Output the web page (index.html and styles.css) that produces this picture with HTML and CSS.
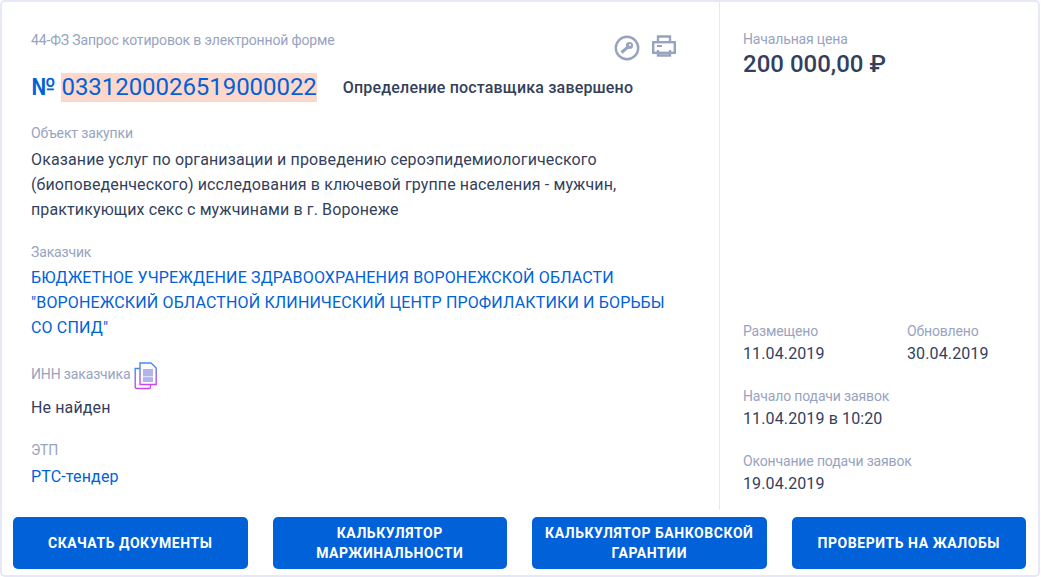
FILE: index.html
```html
<!DOCTYPE html>
<html lang="ru">
<head>
    <meta charset="UTF-8">
    <title>Закупка 0331200026519000022</title>
    <link rel="stylesheet" href="styles.css">
</head>
<body>
    <div class="card">
        <div class="card-body">
            <div class="main">
                <div class="top-row">
                    <div class="label">44-ФЗ Запрос котировок в электронной форме</div>
                    <div class="top-icons">
                        <svg width="26" height="26" viewBox="0 0 26 26">
                            <circle cx="13" cy="13" r="11.200" fill="none" stroke="#98a3c0" stroke-width="2.400"/>
                            <circle cx="15.500" cy="10.500" r="3.600" fill="#98a3c0"/>
                            <path d="M14 12 L7.500 17.500" stroke="#98a3c0" stroke-width="3" fill="none"/>
                            <circle cx="16" cy="10" r="1" fill="#fff"/>
                        </svg>
                        <svg width="24" height="22" viewBox="0 0 24 22">
                            <path d="M6 7V1.500h12V7" fill="none" stroke="#98a3c0" stroke-width="2.400"/>
                            <rect x="1.200" y="7.200" width="21.600" height="10.600" fill="none" stroke="#98a3c0" stroke-width="2.400"/>
                            <path d="M6 15v5.500h12V15" fill="none" stroke="#98a3c0" stroke-width="2.400"/>
                            <path d="M5 11h5" stroke="#98a3c0" stroke-width="2"/>
                        </svg>
                    </div>
                </div>
                <div class="number-row">
                    <a class="number">№ <span class="number-mark">0331200026519000022</span></a>
                    <span class="status">Определение поставщика завершено</span>
                </div>
                <div class="field field-object">
                    <div class="label">Объект закупки</div>
                    <div class="text">Оказание услуг по организации и проведению сероэпидемиологического (биоповеденческого) исследования в ключевой группе населения - мужчин, практикующих секс с мужчинами в г. Воронеже</div>
                </div>
                <div class="field field-customer">
                    <div class="label">Заказчик</div>
                    <a class="text link">БЮДЖЕТНОЕ УЧРЕЖДЕНИЕ ЗДРАВООХРАНЕНИЯ ВОРОНЕЖСКОЙ ОБЛАСТИ "ВОРОНЕЖСКИЙ ОБЛАСТНОЙ КЛИНИЧЕСКИЙ ЦЕНТР ПРОФИЛАКТИКИ И БОРЬБЫ СО СПИД"</a>
                </div>
                <div class="field field-inn">
                    <div class="label label-inn">ИНН заказчика
                        <svg width="24" height="32" viewBox="0 0 24 32">
                            <defs>
                                <linearGradient id="copyGrad" x1="0" y1="0" x2="0" y2="1">
                                    <stop offset="0" stop-color="#3f8df0"/>
                                    <stop offset="1" stop-color="#c946f0"/>
                                </linearGradient>
                            </defs>
                            <path d="M6 10.500H1.200V29a1.500 1.500 0 0 0 1.500 1.500H15a1.500 1.500 0 0 0 1.500-1.500V27" fill="none" stroke="url(#copyGrad)" stroke-width="1.400"/>
                            <path d="M6 26.500V5h11l5.200 5V26.500Z" fill="#fff" stroke="url(#copyGrad)" stroke-width="1.400"/>
                            <rect x="9" y="11" width="10" height="13" fill="#b4b2ea"/>
                            <rect x="9" y="18" width="10" height="1.200" fill="#d5e4f8"/>
                        </svg>
                    </div>
                    <div class="text">Не найден</div>
                </div>
                <div class="field">
                    <div class="label">ЭТП</div>
                    <a class="text link">РТС-тендер</a>
                </div>
            </div>
            <div class="side">
                <div class="price-block">
                    <div class="label">Начальная цена</div>
                    <div class="price">200 000,00 ₽</div>
                </div>
                <div class="dates">
                    <div class="dates-row">
                        <div class="date-cell">
                            <div class="label">Размещено</div>
                            <div class="text">11.04.2019</div>
                        </div>
                        <div class="date-cell">
                            <div class="label">Обновлено</div>
                            <div class="text">30.04.2019</div>
                        </div>
                    </div>
                    <div class="date-cell">
                        <div class="label">Начало подачи заявок</div>
                        <div class="text">11.04.2019 в 10:20</div>
                    </div>
                    <div class="date-cell">
                        <div class="label">Окончание подачи заявок</div>
                        <div class="text">19.04.2019</div>
                    </div>
                </div>
            </div>
        </div>
        <div class="actions">
            <button class="button">Скачать документы</button>
            <button class="button">Калькулятор маржинальности</button>
            <button class="button">Калькулятор банковской гарантии</button>
            <button class="button">Проверить на жалобы</button>
        </div>
    </div>
</body>
</html>
```

FILE: styles.css
```css
* {
    box-sizing: border-box;
}

body {
    margin: 0;
    background-color: #ffffff;
    font-family: Roboto, "Liberation Sans", sans-serif;
    color: #333f5c;
}

.card {
    width: 1040px;
    height: 577px;
    border: 2px solid #e6e8f5;
    border-radius: 5px;
    background: white;
    overflow: hidden;
}

.card-body {
    display: flex;
    height: 508px;
}

.main {
    flex: 0 0 718px;
    padding: 29px 43px 0 29px;
    border-right: 1px solid #e6e8f5;
}

.side {
    flex: 1;
    display: flex;
    flex-direction: column;
    justify-content: space-between;
    padding: 28px 24px 14px 23px;
}

.label {
    font-size: 14px;
    line-height: 18px;
    color: #98a3c0;
    letter-spacing: -0.15px;
}

.text {
    display: block;
    margin-top: 5px;
    font-size: 16px;
    line-height: 25px;
    letter-spacing: 0.12px;
    color: #333f5c;
}

.link {
    color: #0061d9;
    letter-spacing: 0.15px;
}

.top-row {
    display: flex;
    justify-content: space-between;
    align-items: flex-start;
}

.top-icons {
    display: flex;
    align-items: flex-start;
    gap: 12px;
    margin-top: 4px;
}

.number-row {
    display: flex;
    align-items: center;
    margin-top: 12px;
}

.number {
    font-size: 24px;
    font-weight: 500;
    line-height: 29px;
    white-space: nowrap;
    color: #0061d9;
}

.number-mark {
    display: inline-block;
    background-color: #fdd7ca;
    font-weight: 400;
    letter-spacing: -0.05px;
}

.status {
    margin-left: 26px;
    font-size: 16px;
    font-weight: 500;
    letter-spacing: 0.18px;
    white-space: nowrap;
    color: #333f5c;
}

.field {
    margin-top: 21px;
}

.field-object {
    margin-top: 22px;
}

.field-customer .text {
    margin-top: 4px;
}

.field-inn {
    margin-top: 18px;
}

.label-inn {
    display: flex;
    align-items: center;
    gap: 4px;
    height: 32px;
}

.price {
    margin-top: 2px;
    font-size: 24px;
    font-weight: 500;
    line-height: 28px;
    color: #333f5c;
}

.dates {
    display: flex;
    flex-direction: column;
    gap: 21px;
}

.date-cell .text {
    margin-top: 1px;
}

.dates-row {
    display: flex;
}

.dates-row .date-cell {
    width: 164px;
}

.actions {
    display: flex;
    gap: 25px;
    padding: 7px 12px 0 11px;
}

.button {
    flex: 1;
    height: 52px;
    padding: 0 10px;
    border: none;
    border-radius: 5px;
    background-color: #0061d9;
    color: white;
    font-family: inherit;
    font-size: 14px;
    font-weight: 700;
    line-height: 20px;
    letter-spacing: 0.55px;
    text-transform: uppercase;
}
```
